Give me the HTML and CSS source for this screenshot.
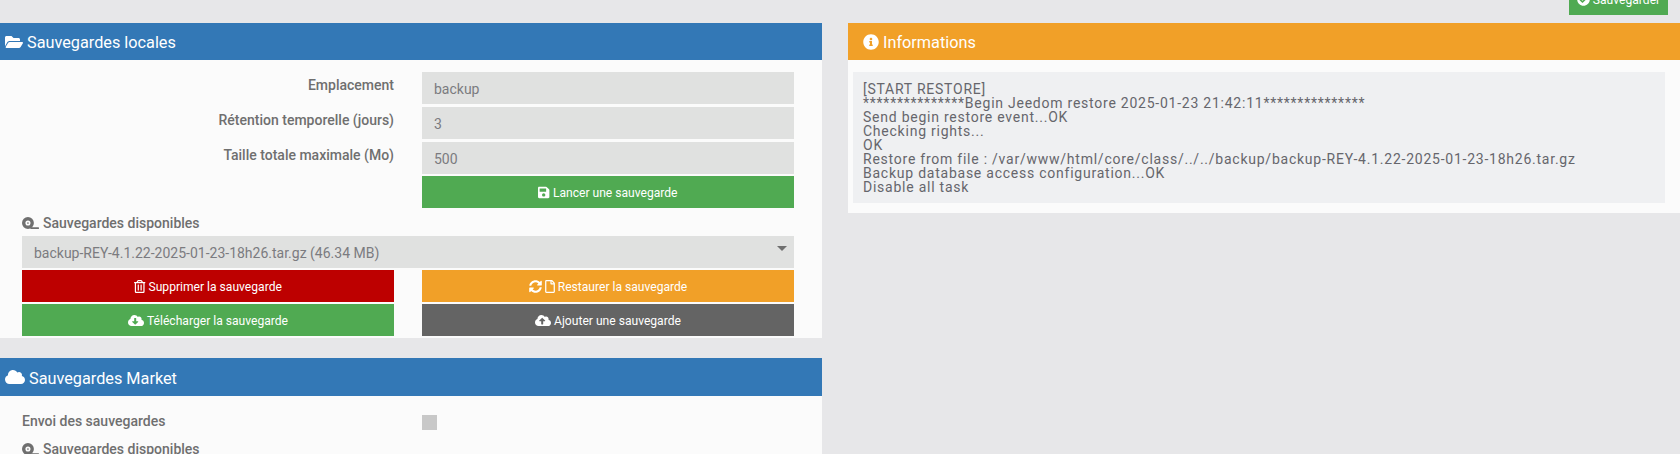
FILE: index.html
```html
<!DOCTYPE html>
<html lang="fr">
<head>
<meta charset="utf-8">
<title>Sauvegardes</title>
<link rel="stylesheet" href="styles.css">
</head>
<body>
<div class="topbar">
  <div class="btn btn-green btn-save">
    <svg class="ico" viewBox="0 0 512 512"><path d="M504 256c0 136.967-111.033 248-248 248S8 392.967 8 256 119.033 8 256 8s248 111.033 248 248zM227.314 387.314l184-184c6.248-6.248 6.248-16.379 0-22.627l-22.627-22.627c-6.248-6.249-16.379-6.249-22.628 0L216 308.118l-70.059-70.059c-6.248-6.248-16.379-6.248-22.628 0l-22.627 22.627c-6.248 6.248-6.248 16.379 0 22.627l104 104c6.249 6.25 16.379 6.25 22.628.001z"/></svg>
    Sauvegarder
  </div>
</div>
<div class="columns">
  <div class="col-left">
    <section class="panel">
      <h3 class="panel-head head-blue">
        <svg class="head-ico ico-folder" viewBox="0 0 576 512"><path d="M572.694 292.093L500.27 416.248A63.997 63.997 0 0 1 444.989 448H45.025c-18.523 0-30.064-20.093-20.731-36.093l72.424-124.155A64 64 0 0 1 152 256h399.964c18.523 0 30.064 20.093 20.73 36.093zM152 224h328v-48c0-26.51-21.49-48-48-48H272l-64-64H48C21.49 64 0 85.49 0 112v278.046l69.077-118.418C86.214 242.25 117.989 224 152 224z"/></svg>
        Sauvegardes locales
      </h3>
      <div class="panel-body">
        <div class="form-grid">
          <div class="label">Emplacement</div>
          <div class="field">backup</div>
          <div class="label">Rétention temporelle (jours)</div>
          <div class="field">3</div>
          <div class="label">Taille totale maximale (Mo)</div>
          <div class="field">500</div>
          <div></div>
          <div class="btn btn-green">
            <svg class="ico ico-save" viewBox="0 0 448 512"><path d="M433.941 129.941l-83.882-83.882A48 48 0 0 0 316.118 32H48C21.49 32 0 53.49 0 80v352c0 26.51 21.49 48 48 48h352c26.51 0 48-21.49 48-48V163.882a48 48 0 0 0-14.059-33.941zM224 416c-35.346 0-64-28.654-64-64 0-35.346 28.654-64 64-64s64 28.654 64 64c0 35.346-28.654 64-64 64zm96-304.52V212c0 6.627-5.373 12-12 12H76c-6.627 0-12-5.373-12-12V108c0-6.627 5.373-12 12-12h228.52c3.183 0 6.235 1.264 8.485 3.515l3.48 3.48A11.996 11.996 0 0 1 320 111.48z"/></svg>
            Lancer une sauvegarde
          </div>
        </div>
        <div class="sub-title">
          <svg class="tape" viewBox="0 0 640 512"><path fill-rule="evenodd" d="M224 32a224 224 0 1 1 0 448 224 224 0 0 1 0-448zm0 128a96 96 0 1 0 0 192 96 96 0 0 0 0-192zm0 64a32 32 0 1 1 0 64 32 32 0 0 1 0-64zM380 416h244a16 16 0 0 1 16 16v32a16 16 0 0 1-16 16H300z"/></svg>
          Sauvegardes disponibles
        </div>
        <div class="field field-select">
          <span>backup-REY-4.1.22-2025-01-23-18h26.tar.gz (46.34 MB)</span>
          <i class="caret"></i>
        </div>
        <div class="actions">
          <div class="btn btn-red">
            <svg class="ico ico-trash" viewBox="0 0 448 512"><path d="M268 416h24a12 12 0 0 0 12-12V188a12 12 0 0 0-12-12h-24a12 12 0 0 0-12 12v216a12 12 0 0 0 12 12zM432 80h-82.41l-34-56.7A48 48 0 0 0 274.41 0H173.59a48 48 0 0 0-41.16 23.3L98.41 80H16A16 16 0 0 0 0 96v16a16 16 0 0 0 16 16h16v336a48 48 0 0 0 48 48h288a48 48 0 0 0 48-48V128h16a16 16 0 0 0 16-16V96a16 16 0 0 0-16-16zM171.84 50.91A6 6 0 0 1 177 48h94a6 6 0 0 1 5.15 2.91L293.61 80H154.39zM368 464H80V128h288zm-212-48h24a12 12 0 0 0 12-12V188a12 12 0 0 0-12-12h-24a12 12 0 0 0-12 12v216a12 12 0 0 0 12 12z"/></svg>
            Supprimer la sauvegarde
          </div>
          <div class="btn btn-orange">
            <svg class="ico ico-sync" viewBox="0 0 512 512"><path d="M370.72 133.28C339.458 104.008 298.888 87.962 255.848 88c-77.458.068-144.328 53.178-162.791 126.85-1.344 5.363-6.122 9.15-11.651 9.15H24.103c-7.498 0-13.194-6.807-11.807-14.176C33.933 94.924 134.813 8 256 8c66.448 0 126.791 26.136 171.315 68.685L463.03 40.97C478.149 25.851 504 36.559 504 57.941V192c0 13.255-10.745 24-24 24H345.941c-21.382 0-32.09-25.851-16.971-40.971l41.75-41.749zM32 296h134.059c21.382 0 32.09 25.851 16.971 40.971l-41.75 41.75c31.262 29.273 71.835 45.319 114.876 45.28 77.418-.07 144.315-53.144 162.787-126.849 1.344-5.363 6.122-9.15 11.651-9.15h57.304c7.498 0 13.194 6.807 11.807 14.176C478.067 417.076 377.187 504 256 504c-66.448 0-126.791-26.136-171.315-68.685L48.97 471.03C33.851 486.149 8 475.441 8 454.059V320c0-13.255 10.745-24 24-24z"/></svg>
            <svg class="ico ico-file" viewBox="0 0 384 512"><path d="M369.9 97.9L286 14C277 5 264.8-.1 252.1-.1H48C21.5 0 0 21.5 0 48v416c0 26.5 21.5 48 48 48h288c26.5 0 48-21.5 48-48V131.9c0-12.7-5.1-25-14.1-34zM332.1 128H256V51.9l76.1 76.1zM48 464V48h160v104c0 13.3 10.7 24 24 24h104v288H48z"/></svg>
            Restaurer la sauvegarde
          </div>
          <div class="btn btn-green">
            <svg class="ico ico-cloud" viewBox="0 0 640 512"><path d="M537.6 226.6c4.1-10.7 6.4-22.4 6.4-34.6 0-53-43-96-96-96-19.7 0-38.1 6-53.3 16.2C367 64.2 315.3 32 256 32c-88.4 0-160 71.6-160 160 0 2.7.1 5.4.2 8.1C40.2 219.8 0 273.2 0 336c0 79.5 64.5 144 144 144h368c70.7 0 128-57.3 128-128 0-61.9-44-113.6-102.4-125.4zm-132.9 88.7L299.3 420.7c-6.2 6.2-16.4 6.2-22.6 0L171.3 315.3c-10.1-10.1-2.9-27.3 11.3-27.3H248V176c0-8.8 7.2-16 16-16h48c8.8 0 16 7.2 16 16v112h65.4c14.2 0 21.4 17.2 11.3 27.3z"/></svg>
            Télécharger la sauvegarde
          </div>
          <div class="btn btn-grey">
            <svg class="ico ico-cloud" viewBox="0 0 640 512"><path d="M537.6 226.6c4.1-10.7 6.4-22.4 6.4-34.6 0-53-43-96-96-96-19.7 0-38.1 6-53.3 16.2C367 64.2 315.3 32 256 32c-88.4 0-160 71.6-160 160 0 2.7.1 5.4.2 8.1C40.2 219.8 0 273.2 0 336c0 79.5 64.5 144 144 144h368c70.7 0 128-57.3 128-128 0-61.9-44-113.6-102.4-125.4zM393.4 288H328v112c0 8.8-7.2 16-16 16h-48c-8.8 0-16-7.2-16-16V288h-65.4c-14.3 0-21.4-17.2-11.3-27.3l105.4-105.4c6.2-6.2 16.4-6.2 22.6 0l105.4 105.4c10.1 10.1 2.9 27.3-11.3 27.3z"/></svg>
            Ajouter une sauvegarde
          </div>
        </div>
      </div>
    </section>
    <section class="panel panel-market">
      <h3 class="panel-head panel-head-tall head-blue">
        <svg class="head-ico ico-market" viewBox="0 0 640 512"><path d="M537.6 226.6c4.1-10.7 6.4-22.4 6.4-34.6 0-53-43-96-96-96-19.7 0-38.1 6-53.3 16.2C367 64.2 315.3 32 256 32c-88.4 0-160 71.6-160 160 0 2.7.1 5.4.2 8.1C40.2 219.8 0 273.2 0 336c0 79.5 64.5 144 144 144h368c70.7 0 128-57.3 128-128 0-61.9-44-113.6-102.4-125.4z"/></svg>
        Sauvegardes Market
      </h3>
      <div class="panel-body market-body">
        <div class="send-row">
          <div class="send-label">Envoi des sauvegardes</div>
          <div class="checkbox"></div>
        </div>
        <div class="sub-title sub-title-market">
          <svg class="tape" viewBox="0 0 640 512"><path fill-rule="evenodd" d="M224 32a224 224 0 1 1 0 448 224 224 0 0 1 0-448zm0 128a96 96 0 1 0 0 192 96 96 0 0 0 0-192zm0 64a32 32 0 1 1 0 64 32 32 0 0 1 0-64zM380 416h244a16 16 0 0 1 16 16v32a16 16 0 0 1-16 16H300z"/></svg>
          Sauvegardes disponibles
        </div>
      </div>
    </section>
  </div>
  <div class="col-right">
    <section class="panel">
      <h3 class="panel-head head-orange">
        <svg class="head-ico ico-info" viewBox="0 0 512 512"><path d="M256 8C119.043 8 8 119.083 8 256c0 136.997 111.043 248 248 248s248-111.003 248-248C504 119.083 392.957 8 256 8zm0 110c23.196 0 42 18.804 42 42s-18.804 42-42 42-42-18.804-42-42 18.804-42 42-42zm56 254c0 6.627-5.373 12-12 12h-88c-6.627 0-12-5.373-12-12v-24c0-6.627 5.373-12 12-12h12v-64h-12c-6.627 0-12-5.373-12-12v-24c0-6.627 5.373-12 12-12h64c6.627 0 12 5.373 12 12v100h12c6.627 0 12 5.373 12 12v24z"/></svg>
        Informations
      </h3>
      <div class="info-body">
        <pre class="log">[START RESTORE]
***************Begin Jeedom restore 2025-01-23 21:42:11***************
Send begin restore event...OK
Checking rights...
OK
Restore from file : /var/www/html/core/class/../../backup/backup-REY-4.1.22-2025-01-23-18h26.tar.gz
Backup database access configuration...OK
Disable all task</pre>
      </div>
    </section>
  </div>
</div>
</body>
</html>
```
FILE: styles.css
```css
* { box-sizing: border-box; }
html, body { height: 100%; }
body {
  margin: 0;
  background: #e7e7e9;
  font-family: Roboto, "Liberation Sans", sans-serif;
  font-size: 14px;
  color: #6f6f6f;
  overflow: hidden;
}
svg { fill: currentColor; display: block; flex: none; }

.topbar {
  height: 23px;
  display: flex;
  justify-content: flex-end;
  align-items: flex-start;
  padding-right: 12px;
}
.btn-save {
  width: 99px;
  height: 32px;
  margin-top: -17px;
}

.columns { display: flex; align-items: flex-start; }
.col-left { width: 822px; flex: none; }
.col-right { flex: 1; margin-left: 26px; }

.panel { background: #fbfbfb; }
.panel-market { margin-top: 20px; }
.panel-head {
  margin: 0;
  height: 37px;
  display: flex;
  align-items: center;
  gap: 4px;
  padding: 2px 0 0 5px;
  color: #fff;
  font-size: 16.25px;
  font-weight: 400;
}
.panel-head-tall { height: 38px; }
.head-blue { background: #3378b6; }
.head-orange { background: #f1a028; padding-left: 15px; }
.head-ico { height: 16px; margin-top: -2px; }
.ico-folder { width: 18px; }
.ico-market { width: 20px; }
.ico-info { width: 16px; }

.panel-body { padding: 12px 28px 2px 22px; }
.form-grid {
  display: grid;
  grid-template-columns: 372px 372px;
  column-gap: 28px;
  row-gap: 3px;
}
.label {
  text-align: right;
  font-weight: 500;
  line-height: 16px;
  padding-top: 5px;
}
.field {
  height: 32px;
  background: #e0e1e0;
  padding: 2px 0 0 12px;
  display: flex;
  align-items: center;
  font-size: 14px;
  color: #7b7b7f;
}
.field-select {
  justify-content: space-between;
  padding-right: 7px;
  margin-top: 5px;
}
.caret {
  width: 0;
  height: 0;
  border-left: 5px solid transparent;
  border-right: 5px solid transparent;
  border-top: 5px solid #6f6f6f;
  margin-bottom: 9px;
}

.btn {
  height: 32px;
  display: flex;
  align-items: center;
  justify-content: center;
  gap: 3px;
  padding-top: 2px;
  color: #fff;
  font-size: 12.1px;
}
.btn-green { background: #50aa52; }
.btn-red { background: #bd0000; }
.btn-orange { background: #f1a028; }
.btn-grey { background: #646464; }
.ico { height: 13px; width: 13px; margin-top: -2px; }
.ico-cloud { width: 16px; }
.ico-save, .ico-trash { width: 11.4px; }
.ico-file { width: 10px; }
.form-grid .btn { margin-top: -1px; }

.sub-title {
  display: flex;
  align-items: center;
  gap: 3px;
  height: 16px;
  margin-top: 7px;
  font-weight: 500;
  line-height: 16px;
}
.tape { width: 17px; height: 14px; margin: 0 1px 0 0; }

.actions {
  display: grid;
  grid-template-columns: 372px 372px;
  column-gap: 28px;
  row-gap: 2px;
  margin-top: 2px;
}

.market-body { padding-top: 14px; }
.send-row {
  display: grid;
  grid-template-columns: 400px 15px;
  align-items: center;
  height: 22px;
}
.send-label { font-weight: 500; }
.checkbox { width: 15px; height: 15px; background: #c8c8c8; margin-top: 3px; }
.sub-title-market { margin-top: 9px; }

.info-body { padding: 12px 15px 10px 5px; }
.log {
  margin: 0;
  height: 131px;
  padding: 10px 10px 0;
  background: #eff0f2;
  font-family: Roboto, "Liberation Sans", sans-serif;
  font-size: 14px;
  line-height: 14px;
  letter-spacing: 0.76px;
  color: #66666c;
  white-space: pre-wrap;
}
```
